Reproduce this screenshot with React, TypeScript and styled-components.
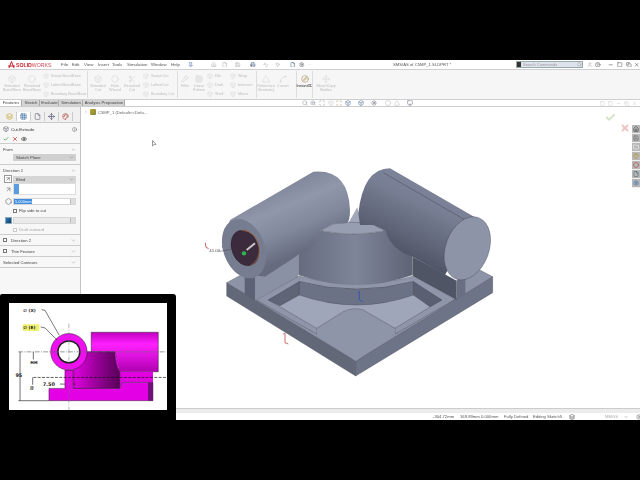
import React from "react";
import styled, { createGlobalStyle } from "styled-components";
import {
  Home, File, Save, Printer, Undo2, MousePointer2, Settings, Pin, Search, User, HelpCircle, Minus, Square, Copy, X,
  Check, Eye, ChevronDown, ChevronUp, ChevronRight, Box, Circle, Layers, Grid3x3, Triangle, Hexagon, Move, Scissors,
  Wrench, Compass, Spline, ZoomIn, Scan, Sun, Monitor, Palette, Folder, Info, ArrowUpRight,
} from "lucide-react";

const Global = createGlobalStyle`
  html, body { margin: 0; padding: 0; background: #000; }
  body { font-family: "Liberation Sans", Arial, sans-serif; }
`;

const Frame = styled.div`
  position: relative; width: 640px; height: 480px; background: #000; overflow: hidden;
  padding: 60px 0; box-sizing: border-box;
`;
const Window = styled.div`
  width: 640px; height: 360px; background: #fff; display: flex; flex-direction: column; filter: blur(0.25px);
`;
const MenuBar = styled.div`
  height: 10px; display: flex; align-items: center; flex: none; border-bottom: 1px solid #cfcfcf; box-sizing: border-box;
`;
const Logo = styled.div`
  width: 61px; padding-left: 8px; box-sizing: border-box; display: flex; align-items: center; gap: 1px;
  font-size: 5.2px; color: #c8202a; font-weight: 700; flex: none;
`;
const LogoLight = styled.span` font-weight: 400; color: #d04a50; `;
const MenuItem = styled.span<{ $w: number }>`
  width: ${(p) => p.$w}px; font-size: 4.4px; color: #555; flex: none;
`;
const Quick = styled.span<{ $w: number; $c?: string }>`
  width: ${(p) => p.$w}px; flex: none; display: flex; align-items: center; color: ${(p) => p.$c || "#a8a8a8"};
`;
const Title = styled.span`
  width: 204px; padding-left: 81px; box-sizing: border-box; font-size: 4.2px; color: #555; flex: none; white-space: nowrap;
`;
const SearchBox = styled.div`
  width: 67px; height: 7px; flex: none; background: #dfe3ee; border: 1px solid #9aa; box-sizing: border-box;
  display: flex; align-items: center; font-size: 4px; color: #999; gap: 2px; margin-right: 4px;
`;
const SearchTag = styled.span` width: 4px; height: 5px; background: #333; flex: none; `;
const SearchLabel = styled.span` flex: 1; `;
const CommandBar = styled.div`
  height: 30px; flex: none; background: #f6f6f6; border-bottom: 1px solid #cfcfcf; display: flex; padding-left: 2px; box-sizing: border-box;
`;
const Tool = styled.div<{ $w: number; $on?: boolean }>`
  width: ${(p) => p.$w}px; flex: none; display: flex; flex-direction: column; align-items: center; padding-top: 5px; gap: 1px;
  font-size: 3.8px; line-height: 4.2px; text-align: center; color: ${(p) => (p.$on ? "#222" : "#bcbcbc")};
  svg { color: ${(p) => (p.$on ? "#8a7a30" : "#cfcfcf")}; flex: none; }
`;
const ToolCol = styled.div<{ $w: number }>`
  width: ${(p) => p.$w}px; flex: none; display: flex; flex-direction: column; justify-content: space-around; padding: 1px 0 1px 1px; box-sizing: border-box;
`;
const ToolLine = styled.div`
  display: flex; align-items: center; gap: 2px; font-size: 3.8px; color: #bcbcbc; white-space: nowrap;
  svg { color: #cfcfcf; flex: none; }
`;
const Sep = styled.div` width: 1px; flex: none; margin: 1px 0; background: #ddd; `;
const BarGap = styled.div` width: 5px; flex: none; `;
const Tabs = styled.div`
  height: 7px; flex: none; background: #fff; display: flex; align-items: center; border-bottom: 1px solid #ccc; box-sizing: border-box; padding: 0 3px 0 1px;
`;
const TabsFill = styled.div` width: 123px; display: flex; background: #d8d8d8; gap: 1px; height: 6px; flex: none; `;
const Tab = styled.div<{ $w: number; $on?: boolean }>`
  width: ${(p) => p.$w}px; flex: none; font-size: 4.2px; line-height: 6px; text-align: center; color: #444; white-space: nowrap;
  background: ${(p) => (p.$on ? "#fff" : "#d4d4d4")};
  border-right: 1px solid #aaa; box-sizing: border-box;
`;
const Main = styled.div` flex: 1; display: flex; min-height: 0; `;
const Panel = styled.div`
  width: 81px; flex: none; background: #f7f7f7; border-right: 1px solid #c4c4c4; box-sizing: border-box;
  display: flex; flex-direction: column;
`;
const PanelTabs = styled.div`
  height: 16px; flex: none; display: flex; align-items: flex-end; padding: 0 0 1px 3px; background: #f0f0f0; box-sizing: border-box; border-bottom: 1px solid #ccc;
`;
const PanelTab = styled.div<{ $on?: boolean; $c: string }>`
  width: 13px; height: 9px; display: flex; align-items: center; justify-content: center; color: ${(p) => p.$c};
  background: ${(p) => (p.$on ? "#fff" : "transparent")}; border-right: 1px solid #ccc;
`;
const PanelHead = styled.div`
  height: 21px; flex: none; border-bottom: 1px solid #ccc; box-sizing: border-box; padding: 2px 3px 0 3px;
`;
const HeadRow = styled.div`
  display: flex; align-items: center; height: 8px; font-size: 4.4px; color: #333; gap: 2px;
`;
const Grow = styled.span` flex: 1; `;
const ActionRow = styled.div` display: flex; align-items: center; height: 9px; gap: 3px; margin-top: 1px; `;
const Section = styled.div<{ $h: number }>`
  height: ${(p) => p.$h}px; flex: none; border-bottom: 1px solid #ccc; box-sizing: border-box; padding: 2px 4px 0 3px;
`;
const SectionLabel = styled.div`
  display: flex; align-items: center; height: 7px; font-size: 4.2px; color: #444; justify-content: space-between;
  svg { color: #888; }
`;
const Field = styled.div<{ $gap?: number }>`
  display: flex; align-items: center; margin-top: ${(p) => p.$gap ?? 1}px;
`;
const Slot = styled.div` width: 10px; flex: none; display: flex; justify-content: center; color: #666; `;
const Select = styled.div<{ $grey?: boolean }>`
  flex: 1; height: 7px; background: ${(p) => (p.$grey ? "#d6d6d6" : "#d0d0d0")}; display: flex; align-items: center; justify-content: space-between;
  padding: 0 2px 0 3px; font-size: 4.2px; color: #444; svg { color: #777; }
`;
const ListBox = styled.div` flex: 1; height: 12px; background: #fff; border: 1px solid #ddd; box-sizing: border-box; `;
const ListMark = styled.div` width: 5px; height: 100%; background: #5b9be0; `;
const NumberBox = styled.div<{ $off?: boolean }>`
  flex: 1; height: 7px; background: ${(p) => (p.$off ? "#eaeaea" : "#fff")}; border: 1px solid #d6d6d6; box-sizing: border-box;
  display: flex; align-items: center; justify-content: space-between; font-size: 4px; color: #fff;
`;
const Selected = styled.span` background: #3d8de0; padding: 0 1px; width: 18px; box-sizing: border-box; line-height: 5px; white-space: nowrap; `;
const Spin = styled.span` width: 4px; height: 5px; background: #ddd; border-left: 1px solid #bbb; margin-left: auto; `;
const CheckField = styled.div<{ $off?: boolean }>`
  display: flex; align-items: center; gap: 1px; height: 7px; margin: 2px 0 0 10px; font-size: 4.2px; color: ${(p) => (p.$off ? "#aaa" : "#444")};
`;
const Box3 = styled.span<{ $off?: boolean }>`
  width: 4px; height: 4px; background: #fff; border: 1px solid ${(p) => (p.$off ? "#ccc" : "#777")}; box-sizing: border-box; flex: none; margin-right: 1px;
`;
const BlueIcon = styled.span`
  width: 7px; height: 7px; background: linear-gradient(135deg, #2f7ab8, #123a66); display: block; border: 1px solid #8ab; box-sizing: border-box;
`;
const IconBox = styled.span`
  width: 8px; height: 8px; background: #fff; border: 1px solid #999; box-sizing: border-box; display: flex; align-items: center; justify-content: center; color: #444;
`;
const Collapsed = styled.div`
  height: 11px; flex: none; border-bottom: 1px solid #ccc; box-sizing: border-box; display: flex; align-items: center; padding: 0 4px 0 3px;
  font-size: 4.2px; color: #444; gap: 3px; svg { color: #888; }
`;
const Graphics = styled.div` flex: 1; position: relative; background: #fff; overflow: hidden; `;
const Tree = styled.div`
  position: absolute; left: 3px; top: 2px; display: flex; align-items: center; gap: 2px; font-size: 4.2px; color: #666; svg { color: #777; }
`;
const TreeIcon = styled.span` width: 6px; height: 6px; background: linear-gradient(135deg, #c8a030, #7a8a40); display: block; border-radius: 1px; `;
const HeadsUp = styled.div`
  margin-left: 178px; display: flex; align-items: center; height: 6px; flex: none;
`;
const HeadsIcon = styled.span<{ $w: number; $c?: string }>`
  width: ${(p) => p.$w}px; display: flex; color: ${(p) => p.$c || "#8a93a0"}; flex: none;
`;
const ViewButtons = styled.div`
  margin-left: auto; display: flex; gap: 3px; color: #c6c6c6; align-items: center;
`;
const Confirm = styled.div` position: absolute; right: 24px; top: 2px; color: #d5e3c8; `;
const Cancel = styled.div` position: absolute; right: 10px; top: 12px; color: #f1c3c3; `;
const TaskPane = styled.div`
  position: absolute; right: 0; top: 18px; width: 8px; display: flex; flex-direction: column; background: #b8b8b8;
`;
const TaskIcon = styled.div<{ $c: string }>`
  height: 8px; display: flex; align-items: center; justify-content: center; color: ${(p) => p.$c}; border-bottom: 1px solid #eee;
`;
const ModelSvg = styled.svg` position: absolute; left: 119px; top: 53px; width: 300px; height: 220px; `;
const Cursor = styled.svg` position: absolute; left: 71px; top: 33px; width: 5px; height: 7px; `;
const Status = styled.div` height: 12px; flex: none; display: flex; flex-direction: column; background: #fff; `;
const StatusStrip = styled.div` height: 5px; background: #ececec; border-top: 1px solid #ccc; box-sizing: border-box; flex: none; `;
const StatusRow = styled.div`
  flex: 1; display: flex; align-items: center; padding-left: 433px; font-size: 4.2px; color: #555; white-space: nowrap;
`;
const StatusCell = styled.span<{ $w: number; $c?: string }>`
  width: ${(p) => p.$w}px; flex: none; color: ${(p) => p.$c || "#555"}; display: flex;
`;
const Inset = styled.div`
  position: absolute; left: 0; top: 294px; width: 176px; height: 126px; background: #000; border-radius: 2px 3px 0 0;
  padding: 9px 0 0 9px; box-sizing: border-box;
`;
const InsetSheet = styled.svg` display: block; width: 158px; height: 107px; background: #fff; `;

const I = 5.5;

function ToolButton({ w, lines, icon: Icon, on }: { w: number; lines: string[]; icon: React.ElementType; on?: boolean }) {
  return (
    <Tool $w={w} $on={on}>
      <Icon size={8} strokeWidth={1.4} />
      <span>{lines[0]}<br />{lines[1]}</span>
    </Tool>
  );
}
function Lines({ w, items }: { w: number; items: string[] }) {
  return (
    <ToolCol $w={w}>
      {items.map((t) => (
        <ToolLine key={t}><Box size={6} strokeWidth={1.4} />{t}</ToolLine>
      ))}
    </ToolCol>
  );
}

function Model() {
  return (
    <ModelSvg viewBox="0 0 900 660">
      <defs>
        <linearGradient id="cylL" x1="0.35" y1="0" x2="0.72" y2="0.72">
          <stop offset="0" stopColor="#747a8e" />
          <stop offset="0.45" stopColor="#9197ab" />
          <stop offset="0.72" stopColor="#82889c" />
          <stop offset="1" stopColor="#666c7e" />
        </linearGradient>
        <linearGradient id="cylR" x1="0.65" y1="0" x2="0.25" y2="0.75">
          <stop offset="0" stopColor="#82889d" />
          <stop offset="0.4" stopColor="#787e93" />
          <stop offset="0.78" stopColor="#5f6577" />
          <stop offset="1" stopColor="#4f5566" />
        </linearGradient>
        <linearGradient id="dome" x1="0" y1="0" x2="1" y2="0">
          <stop offset="0" stopColor="#666c7e" />
          <stop offset="0.5" stopColor="#7f8599" />
          <stop offset="1" stopColor="#5e6475" />
        </linearGradient>
      </defs>
      <g stroke="#3a3e4a" strokeWidth="1" strokeLinejoin="round">
        <path d="M80 368 L467 603 L467 648 L80 408 Z" fill="#636879" />
        <path d="M467 603 L878 350 L878 398 L467 648 Z" fill="#6e7487" />
        <path d="M80 368 L135 338 L135 402 L170 420 L350 522 L350 505 L585 505 L585 522 L765 418 L795 402 L795 345 L830 325 L878 350 L467 603 Z" fill="#8e94a8" />
        <path d="M135 338 L165 345 L295 285 L295 350 L170 420 L135 402 Z" fill="#8b91a4" stroke="none" />
        <path d="M135 340 L165 350 L165 423 L135 402 Z" fill="#5c6273" stroke="none" />
        <path d="M638 290 L770 362 L770 420 L638 348 Z" fill="#4f5565" stroke="none" />
        <path d="M770 360 L795 345 L795 405 L770 420 Z" fill="#6a7083" stroke="none" />
        <path d="M170 420 L298 348 Q470 395 640 348 L765 418 L585 522 L585 505 L350 505 L350 522 Z" fill="#9096aa" />
        <path d="M205 420 L298 365 Q470 410 640 365 L725 420 L585 505 L350 505 Z" fill="#a0a6b9" />
        <path d="M205 420 L298 365 L298 405 L240 437 Z" fill="#5f6577" />
        <path d="M640 365 L725 420 L690 440 L640 405 Z" fill="#5a6071" />
        <path d="M298 365 Q470 410 640 365 L640 405 Q470 465 298 405 Z" fill="#6c7285" />
        <path d="M350 505 L430 455 Q460 440 490 450 L585 505 L585 522 L467 603 L350 522 Z" fill="#8f95a9" stroke="none" />
        <path d="M350 505 L430 455 Q460 440 490 450 L585 505" fill="none" />
        <path d="M440 198 L472 142 L484 198 Z" fill="#a2a8ba" stroke="none" />
        <path d="M295 345 V285 L362 212 Q460 232 556 212 L638 290 V345 Q470 405 295 345 Z" fill="url(#dome)" stroke="none" />
        <path d="M362 212 L400 192 Q460 180 520 195 L556 212 Q460 232 362 212 Z" fill="#989eb1" />
        <path d="M90 180 L340 35 Q445 25 450 150 Q450 185 440 190 L400 192 L362 212 Q362 250 295 285 L195 350 L120 340 L65 260 Z" fill="url(#cylL)" stroke="none" />
        <ellipse cx="132" cy="266" rx="62" ry="92" transform="rotate(-20 132 266)" fill="#777d90" stroke="none" />
        <ellipse cx="135" cy="264" rx="40" ry="55" transform="rotate(-20 135 264)" fill="#3b2b3c" stroke="#1b1b22" />
        <path d="M125 210 Q170 215 178 262 Q180 300 150 318" fill="none" stroke="#a8623c" strokeWidth="2.4" />
        <path d="M140 270 L165 250" stroke="#c9c9c9" strokeWidth="6" />
        <circle cx="132" cy="280" r="6.5" fill="#2eb84f" stroke="none" />
        <path d="M475 160 Q490 25 570 25 L830 175 L735 345 L638 290 Q575 270 556 212 L520 195 L480 195 Z" fill="url(#cylR)" stroke="none" />
        <path d="M550 38 L792 178" fill="none" stroke="#3a3e4a" strokeWidth="1.2" />
        <ellipse cx="802" cy="265" rx="65" ry="98" transform="rotate(20 802 265)" fill="#8e94a8" />
      </g>
      <g fill="none" strokeWidth="2.4">
        <path d="M255 520 L255 548 L265 552 M255 520 L250 522" stroke="#c0453e" />
        <path d="M478 395 L478 420 L490 425 M478 395 L474 397" stroke="#2f4fb8" />
        <path d="M16 248 L18 262 L26 266" stroke="#b04040" />
        <path d="M60 274 L92 268" stroke="#444" strokeWidth="1.4" />
      </g>
      <text x="28" y="276" fontSize="13" fill="#444" fontFamily="Liberation Sans">41.00</text>
    </ModelSvg>
  );
}

function Drawing() {
  return (
    <InsetSheet viewBox="28 38 473 322">
      <defs>
        <linearGradient id="top" x1="0" y1="0" x2="0" y2="1">
          <stop offset="0" stopColor="#c000c0" />
          <stop offset="0.3" stopColor="#ff20ff" />
          <stop offset="1" stopColor="#b000b0" />
        </linearGradient>
        <linearGradient id="mid" x1="0" y1="0" x2="1" y2="0">
          <stop offset="0" stopColor="#e000e0" />
          <stop offset="0.6" stopColor="#8a008a" />
          <stop offset="1" stopColor="#5a005a" />
        </linearGradient>
      </defs>
      <g stroke="#222" strokeWidth="1.4">
        <path d="M274 126 H476 V245 H360 L345 185 H274 Z" fill="url(#top)" />
        <path d="M360 245 H460 V277 H368 L360 295 H220 V240 L262 185 H345 Z" fill="#e000e0" stroke="none" />
        <path d="M222 295 V240 L262 185 H345 Q345 225 360 245 V295 Z" fill="url(#mid)" />
        <path d="M147 295 H195 V240 H220 V295 H360 L368 277 H460 V332 H147 Z" fill="#e400e4" />
        <path d="M445 277 H460 V332 H445 Z" fill="#70107a" stroke="none" />
        <circle cx="207" cy="185" r="55" fill="#ee10ee" />
        <circle cx="207" cy="185" r="33" fill="#fff" stroke="#222" strokeWidth="4.5" />
      </g>
      <g fill="none">
        <path d="M55 185 H500" stroke="#666" strokeWidth="2" strokeDasharray="14 4 3 4" />
        <path d="M100 262 H500" stroke="#111" strokeWidth="2" strokeDasharray="9 4" />
        <path d="M207 100 V360" stroke="#777" strokeWidth="1.6" strokeDasharray="14 4 3 4" />
        <path d="M60 185 V332 M55 332 H147" stroke="#111" strokeWidth="1.8" />
        <path d="M100 185 V208 M98 262 V284 M180 282 H195 M220 282 H228" stroke="#111" strokeWidth="1.8" />
        <path d="M125 58 L135 60 L178 135 M122 110 L135 113 L172 150" stroke="#222" strokeWidth="1.8" />
      </g>
      <rect x="68" y="102" width="50" height="20" rx="3" fill="#eef070" />
      <g fill="#222" fontFamily="DejaVu Sans" fontWeight="700" fontSize="13">
        <text x="70" y="64">∅ (X)</text>
        <text x="70" y="117">∅ (E)</text>
        <text x="91" y="221">HH</text>
        <text x="91" y="298">JJ</text>
        <text x="46" y="260" fontSize="15">95</text>
        <text x="128" y="288" fontSize="15">7.50</text>
      </g>
    </InsetSheet>
  );
}

export default function App() {
  return (
    <Frame>
      <Global />
      <Window>
        <MenuBar>
          <Logo>
            <svg width="7" height="8" viewBox="0 0 7 8"><path d="M3.5 0.5 L1 7 M3.5 0.5 L6 7 M0 5 H7" stroke="#c8202a" strokeWidth="1" fill="none" /></svg>
            <span>SOLID<LogoLight>WORKS</LogoLight></span>
          </Logo>
          <MenuItem $w={11}>File</MenuItem>
          <MenuItem $w={12}>Edit</MenuItem>
          <MenuItem $w={14}>View</MenuItem>
          <MenuItem $w={14}>Insert</MenuItem>
          <MenuItem $w={15}>Tools</MenuItem>
          <MenuItem $w={24}>Simulation</MenuItem>
          <MenuItem $w={20}>Window</MenuItem>
          <MenuItem $w={17}>Help</MenuItem>
          <Quick $w={23} $c="#3c5fa8"><Pin size={I} /></Quick>
          <Quick $w={11}><Home size={I} /></Quick>
          <Quick $w={13}><File size={I} /></Quick>
          <Quick $w={15}><Save size={I} /></Quick>
          <Quick $w={13} $c="#34506e"><Printer size={I} /></Quick>
          <Quick $w={12}><Undo2 size={I} /></Quick>
          <Quick $w={15}><MousePointer2 size={I} /></Quick>
          <Quick $w={9} $c="#34506e"><File size={I} /></Quick>
          <Quick $w={9} $c="#555"><Settings size={I} /></Quick>
          <Quick $w={4}><ChevronDown size={3} /></Quick>
          <Title>SMS/AS of C5MP_1.SLDPRT *</Title>
          <SearchBox><SearchTag /><SearchLabel>Search Commands</SearchLabel><Search size={5} /></SearchBox>
          <Quick $w={8}><User size={I} /></Quick>
          <Quick $w={13} $c="#444"><HelpCircle size={I} /></Quick>
          <Quick $w={9} $c="#333"><Minus size={I} /></Quick>
          <Quick $w={9} $c="#444"><Square size={I} /></Quick>
          <Quick $w={8} $c="#444"><Copy size={I} /></Quick>
          <Quick $w={6} $c="#333"><X size={I} /></Quick>
        </MenuBar>
        <CommandBar>
          <ToolButton w={20} icon={Box} lines={["Extruded", "Boss/Base"]} />
          <ToolButton w={20} icon={Circle} lines={["Revolved", "Boss/Base"]} />
          <Lines w={45} items={["Swept Boss/Base", "Lofted Boss/Base", "Boundary Boss/Base"]} />
          <Sep />
          <ToolButton w={20} icon={Box} lines={["Extruded", "Cut"]} />
          <ToolButton w={14} icon={Circle} lines={["Hole", "Wizard"]} />
          <ToolButton w={20} icon={Scissors} lines={["Revolved", "Cut"]} />
          <Lines w={35} items={["Swept Cut", "Lofted Cut", "Boundary Cut"]} />
          <Sep />
          <ToolButton w={14} icon={Wrench} lines={["Fillet", "·"]} />
          <ToolButton w={14} icon={Grid3x3} lines={["Linear", "Pattern"]} />
          <Lines w={23} items={["Rib", "Draft", "Shell"]} />
          <Lines w={27} items={["Wrap", "Intersect", "Mirror"]} />
          <Sep />
          <ToolButton w={18} icon={Triangle} lines={["Reference", "Geometry"]} />
          <ToolButton w={16} icon={Spline} lines={["Curves", "·"]} />
          <BarGap />
          <Sep />
          <ToolButton w={15} icon={Compass} lines={["Instant3D", ""]} on />
          <Sep />
          <ToolButton w={26} icon={Move} lines={["Move/Copy", "Bodies"]} />
        </CommandBar>
        <Tabs>
          <TabsFill>
            <Tab $w={21} $on>Features</Tab>
            <Tab $w={17}>Sketch</Tab>
            <Tab $w={18}>Evaluate</Tab>
            <Tab $w={23}>Simulation</Tab>
            <Tab $w={41}>Analysis Preparation</Tab>
          </TabsFill>
          <HeadsUp>
            <HeadsIcon $w={8}><Search size={6} /></HeadsIcon>
            <HeadsIcon $w={9}><ZoomIn size={6} /></HeadsIcon>
            <HeadsIcon $w={9}><Scan size={6} /></HeadsIcon>
            <HeadsIcon $w={8} $c="#ccc"><Box size={6} /></HeadsIcon>
            <HeadsIcon $w={9} $c="#b09060"><Scan size={6} /></HeadsIcon>
            <HeadsIcon $w={13} $c="#4a6f9a"><Box size={6} /></HeadsIcon>
            <HeadsIcon $w={13} $c="#4a6f9a"><Box size={6} /></HeadsIcon>
            <HeadsIcon $w={14} $c="#556"><Sun size={6} /></HeadsIcon>
            <HeadsIcon $w={9} $c="#bbb"><Circle size={6} /></HeadsIcon>
            <HeadsIcon $w={13} $c="#bbb"><Triangle size={6} /></HeadsIcon>
            <HeadsIcon $w={8} $c="#778"><Monitor size={6} /></HeadsIcon>
          </HeadsUp>
          <ViewButtons>
            <Square size={5} /><Square size={5} /><Minus size={5} /><Copy size={5} /><X size={5} />
          </ViewButtons>
        </Tabs>
        <Main>
          <Panel>
            <PanelTabs>
              <PanelTab $c="#c9a227"><Layers size={7} /></PanelTab>
              <PanelTab $c="#3c6ea8" $on><Grid3x3 size={7} /></PanelTab>
              <PanelTab $c="#667"><File size={7} /></PanelTab>
              <PanelTab $c="#446"><Move size={7} /></PanelTab>
              <PanelTab $c="#b5483a"><Palette size={7} /></PanelTab>
            </PanelTabs>
            <PanelHead>
              <HeadRow><Box size={6} color="#556" />Cut-Extrude<Grow /><Info size={5} color="#555" /></HeadRow>
              <ActionRow>
                <Check size={6} color="#39a03c" strokeWidth={3} />
                <X size={6} color="#c83c3c" strokeWidth={3} />
                <Eye size={6} color="#333" strokeWidth={2.4} />
              </ActionRow>
            </PanelHead>
            <Section $h={21}>
              <SectionLabel>From<ChevronUp size={5} /></SectionLabel>
              <Field><Slot /><Select>Sketch Plane<ChevronDown size={5} /></Select></Field>
            </Section>
            <Section $h={70}>
              <SectionLabel>Direction 1<ChevronUp size={5} /></SectionLabel>
              <Field><Slot><IconBox><ArrowUpRight size={6} /></IconBox></Slot><Select $grey>Blind<ChevronDown size={5} /></Select></Field>
              <Field $gap={0}><Slot><ArrowUpRight size={7} /></Slot><ListBox><ListMark /></ListBox></Field>
              <Field $gap={3}><Slot><Hexagon size={7} /></Slot><NumberBox><Selected>5.000mm</Selected><Spin /></NumberBox></Field>
              <CheckField><Box3 />Flip side to cut</CheckField>
              <Field $gap={3}><Slot><BlueIcon /></Slot><NumberBox $off><Spin /></NumberBox></Field>
              <CheckField $off><Box3 $off />Draft outward</CheckField>
            </Section>
            <Collapsed><Box3 />Direction 2<Grow /><ChevronDown size={5} /></Collapsed>
            <Collapsed><Box3 />Thin Feature<Grow /><ChevronDown size={5} /></Collapsed>
            <Collapsed>Selected Contours<Grow /><ChevronDown size={5} /></Collapsed>
          </Panel>
          <Graphics>
            <Tree><ChevronRight size={4} /><TreeIcon />C5MP_1 (Default&lt;&lt;Defa...</Tree>
            <Confirm><Check size={11} strokeWidth={4} /></Confirm>
            <Cancel><X size={10} strokeWidth={4.5} /></Cancel>
            <TaskPane>
              <TaskIcon $c="#333"><Home size={6} /></TaskIcon>
              <TaskIcon $c="#666"><Save size={6} /></TaskIcon>
              <TaskIcon $c="#fff"><Folder size={6} /></TaskIcon>
              <TaskIcon $c="#b59a3c"><Palette size={6} /></TaskIcon>
              <TaskIcon $c="#b03030"><Circle size={6} /></TaskIcon>
              <TaskIcon $c="#356"><File size={6} /></TaskIcon>
              <TaskIcon $c="#2d6fb0"><Settings size={6} /></TaskIcon>
            </TaskPane>
            <Cursor viewBox="0 0 5 7"><path d="M0.5 0.5 V6 L2 4.6 L4 4.4 Z" fill="#fff" stroke="#555" strokeWidth="0.6" /></Cursor>
            <Model />
          </Graphics>
        </Main>
        <Status>
          <StatusStrip />
          <StatusRow>
            <StatusCell $w={27}>-304.72mm</StatusCell>
            <StatusCell $w={44}>169.89mm 0.000mm</StatusCell>
            <StatusCell $w={29}>Fully Defined</StatusCell>
            <StatusCell $w={36}>Editing Sketch5</StatusCell>
            <StatusCell $w={36}><Layers size={6} color="#444" /></StatusCell>
            <StatusCell $w={19} $c="#aaa">MMGS</StatusCell>
            <StatusCell $w={12}><ChevronDown size={4} /></StatusCell>
            <StatusCell $w={6}><Settings size={6} color="#777" /></StatusCell>
          </StatusRow>
        </Status>
      </Window>
      <Inset><Drawing /></Inset>
    </Frame>
  );
}
